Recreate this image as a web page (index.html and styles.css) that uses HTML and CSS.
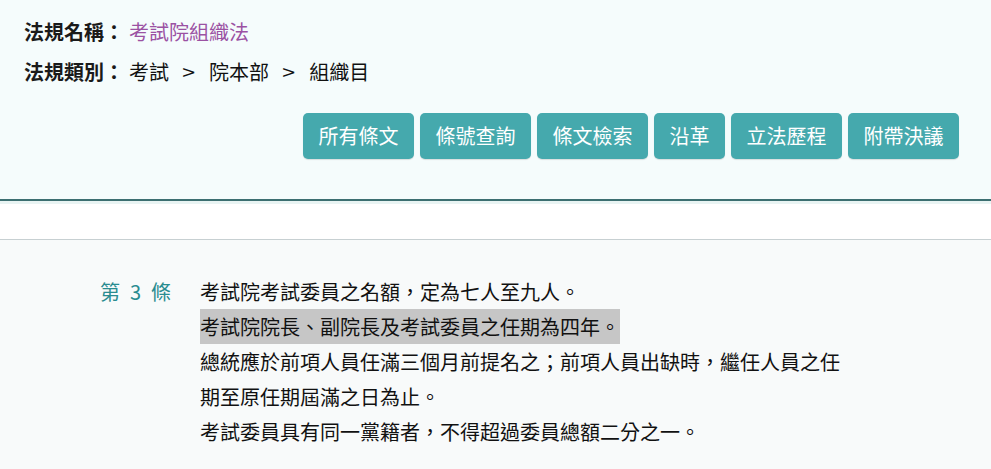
FILE: index.html
```html
<!DOCTYPE html>
<html lang="zh-Hant">
<head>
<meta charset="utf-8">
<title>考試院組織法</title>
<link rel="stylesheet" href="styles.css">
</head>
<body>
<header class="law-header">
  <div class="info-row"><span class="info-label">法規名稱：</span><a class="law-name" href="#">考試院組織法</a></div>
  <div class="info-row"><span class="info-label">法規類別：</span><span class="crumbs">考試<span class="sep">&gt;</span>院本部<span class="sep">&gt;</span>組織目</span></div>
  <nav class="btn-row">
    <a class="btn" href="#">所有條文</a>
    <a class="btn" href="#">條號查詢</a>
    <a class="btn" href="#">條文檢索</a>
    <a class="btn" href="#">沿革</a>
    <a class="btn" href="#">立法歷程</a>
    <a class="btn" href="#">附帶決議</a>
  </nav>
</header>
<div class="spacer"></div>
<main class="article">
  <div class="art-no">第<span class="num">3</span>條</div>
  <div class="art-body">
    <div class="line">考試院考試委員之名額，定為七人至九人。</div>
    <div class="line"><span class="hl">考試院院長、副院長及考試委員之任期為四年。</span></div>
    <div class="line">總統應於前項人員任滿三個月前提名之；前項人員出缺時，繼任人員之任<br>期至原任期屆滿之日為止。</div>
    <div class="line">考試委員具有同一黨籍者，不得超過委員總額二分之一。</div>
  </div>
</main>
</body>
</html>
```

FILE: styles.css
```css
html, body {
  margin: 0;
  padding: 0;
}
body {
  background: #f8fafa;
  font-family: "Noto Sans CJK TC", "Noto Sans", sans-serif;
  color: #111;
}
.law-header {
  background: #f5fcfc;
  padding: 12px 32px 40px 24px;
  border-bottom: 2px solid #3c6f71;
}
.info-row {
  font-size: 20px;
  line-height: 40px;
  height: 40px;
  white-space: nowrap;
}
.info-label {
  font-weight: bold;
  color: #1a1a1a;
  margin-right: 5px;
}
.law-name {
  color: #9b52a3;
  text-decoration: none;
}
.crumbs {
  color: #111;
}
.sep {
  display: inline-block;
  margin: 0 15px 0 14px;
  transform: scale(1.15, 1);
}
.btn-row {
  display: flex;
  justify-content: flex-end;
  gap: 6px;
  margin-top: 21px;
}
.btn {
  display: block;
  height: 46px;
  line-height: 46px;
  padding: 0 15.5px;
  font-size: 20px;
  color: #ffffff;
  background: #45a9ad;
  border-radius: 5px;
  text-decoration: none;
  box-shadow: 0 1px 1px rgba(0, 0, 0, 0.12);
}
.spacer {
  background: #ffffff;
  border-top: 3px solid #e9f4f3;
  border-bottom: 1px solid #c7d0d2;
  box-sizing: border-box;
  height: 39px;
}
.article {
  display: grid;
  grid-template-columns: 100px auto;
  padding: 34px 0 0 100px;
  font-size: 20px;
  line-height: 35px;
}
.art-no {
  color: #2a8c90;
}
.num {
  display: inline-block;
  margin: 0 10px;
}
.art-body .line {
  color: #111;
}
.hl {
  background: #c6c6c6;
  display: inline-block;
}
```
